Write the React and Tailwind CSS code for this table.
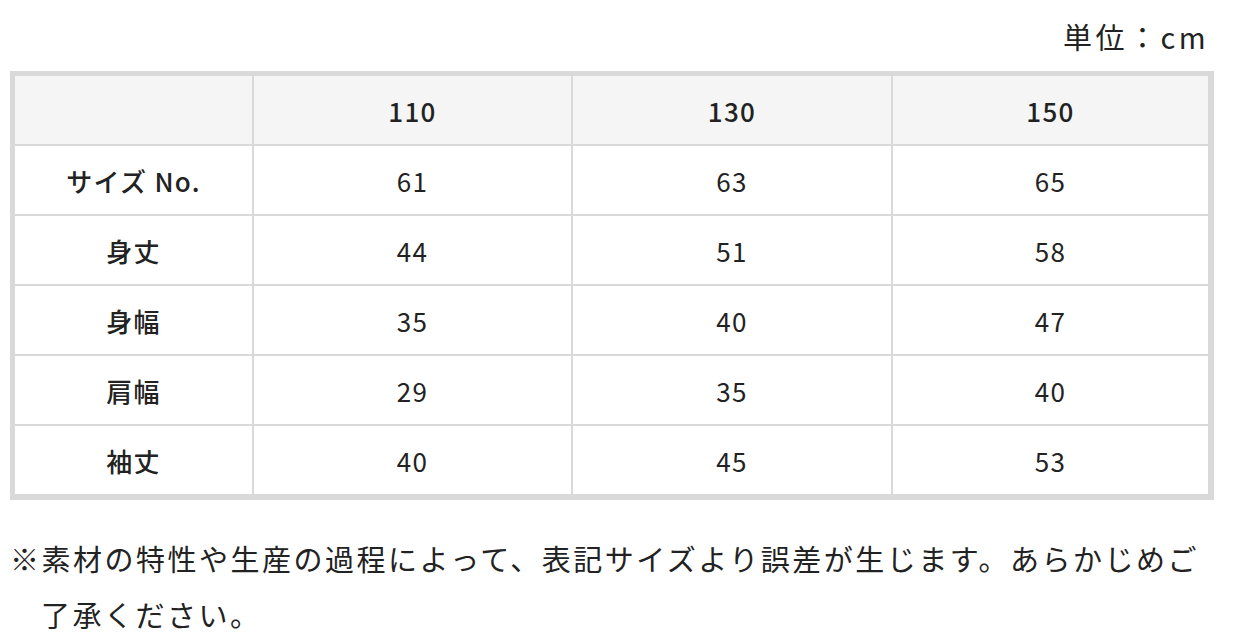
const sizes = ["110", "130", "150"];

const rows = [
  { label: "サイズ No.", values: ["61", "63", "65"] },
  { label: "身丈", values: ["44", "51", "58"] },
  { label: "身幅", values: ["35", "40", "47"] },
  { label: "肩幅", values: ["29", "35", "40"] },
  { label: "袖丈", values: ["40", "45", "53"] },
];

const font = { fontFamily: '"Noto Sans CJK JP", "Noto Sans", sans-serif' };

function Cell({ children, head, bold }) {
  return (
    <div
      className={`flex h-[68px] items-center justify-center text-[26px] tracking-[0.05em] text-[#222] ${head ? "bg-[#f5f5f5]" : "bg-white"} ${bold ? "font-medium" : "font-normal"}`}
    >
      {children}
    </div>
  );
}

export default function App() {
  return (
    <main className="min-h-screen w-[1234px] bg-white px-[10px] pt-[15px]" style={font}>
      <p className="pr-[15px] text-right text-[29px] leading-[42px] tracking-[0.12em] text-[#222]">
        単位：cm
      </p>

      <div className="mt-[14px] grid w-[1204px] grid-cols-[237px_317px_318px_1fr] gap-[2px] border-[5px] border-r-[6px] border-b-[6px] border-[#d9d9d9] bg-[#d9d9d9]">
        <Cell head />
        {sizes.map((s) => (
          <Cell key={s} head bold>
            {s}
          </Cell>
        ))}
        {rows.map((row) => (
          <div key={row.label} className="contents">
            <Cell bold>{row.label}</Cell>
            {row.values.map((v, i) => (
              <Cell key={i}>{v}</Cell>
            ))}
          </div>
        ))}
      </div>

      <p className="mt-[30px] w-[1196px] pl-[31px] -indent-[31px] text-[29px] leading-[56px] tracking-[2.5px] text-[#222]">
        ※素材の特性や生産の過程によって、表記サイズより誤差が生じます。あらかじめご了承ください。
      </p>
    </main>
  );
}
